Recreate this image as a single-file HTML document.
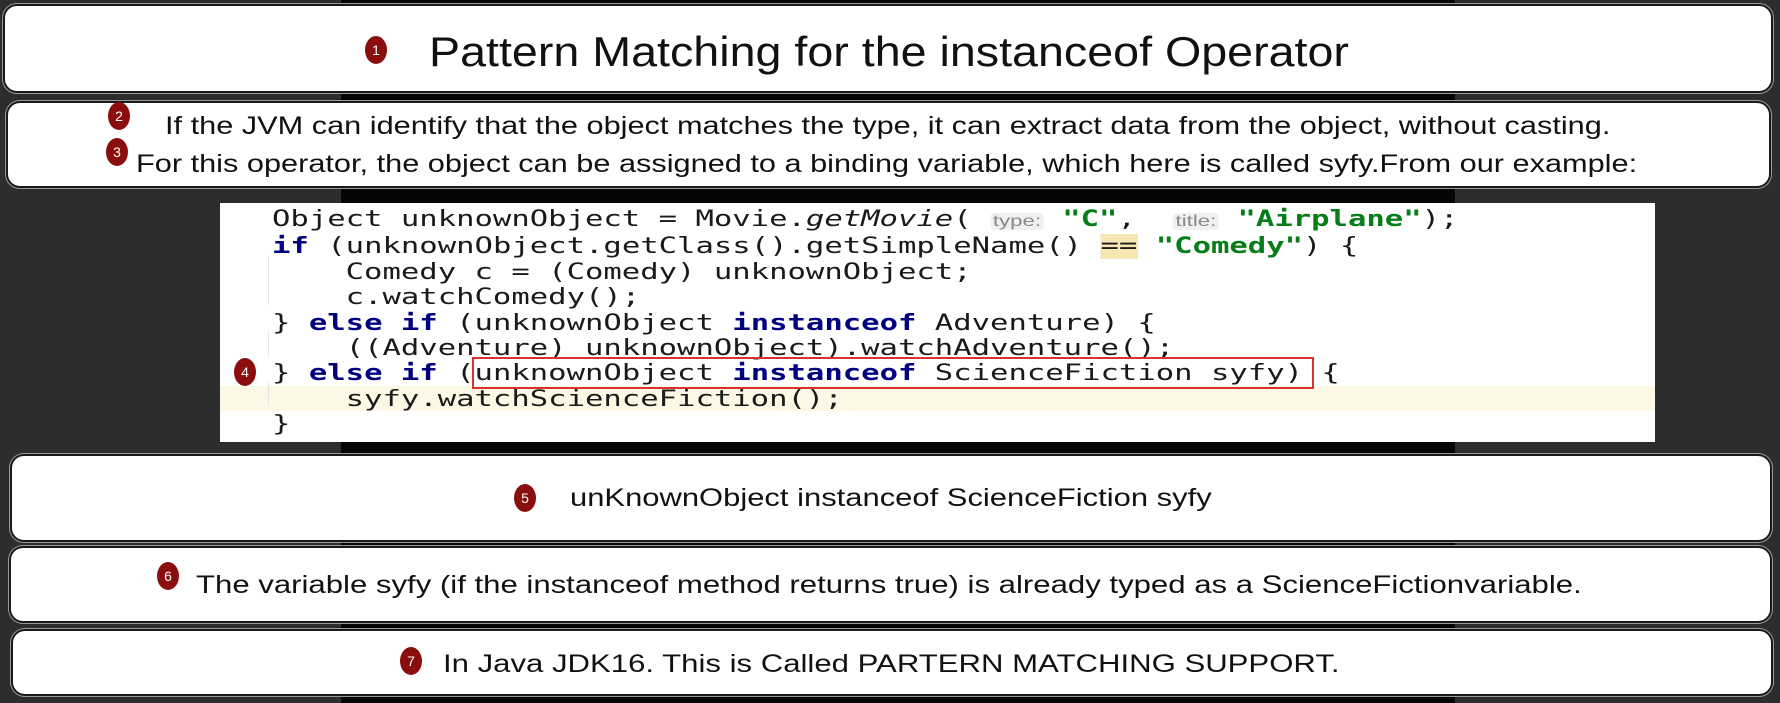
<!DOCTYPE html>
<html><head><meta charset="utf-8"><style>
*{margin:0;padding:0;box-sizing:border-box}
body{width:1780px;height:703px;background:#2d2d2d;position:relative;overflow:hidden;font-family:"Liberation Sans",Arial,sans-serif}
.blk{position:absolute;left:341px;top:0;width:1114px;height:703px;background:#050505}
.box{position:absolute;background:#fff;border:2px solid #1a1a1a;border-radius:14px;box-shadow:0 0 0 1px #999}
.t{position:absolute;white-space:nowrap;color:#111;transform:scaleX(1.24);transform-origin:0 0}
.n{position:absolute;width:22px;height:28px;border-radius:50%;background:#8b0e0e;color:#fff;font-size:14px;text-align:center;line-height:28px}
.code{position:absolute;left:220px;top:203px;width:1435px;height:239px;background:#fff}
.hl{position:absolute;left:0;top:183px;width:1435px;height:25px;background:#fdf8e6}
.lines{position:absolute;left:52px;top:4px;font-family:"DejaVu Sans Mono",monospace;font-size:22px;line-height:25.4px;color:#1a1a1a;white-space:pre;transform:scaleX(1.39);transform-origin:0 0}
.k{color:#000080;font-weight:bold}
.s{color:#067d17;font-weight:bold}
.h{font-family:"Liberation Sans",sans-serif;font-size:16px;color:#888;background:#f0f0f0;border-radius:3px;padding:0 2px}
.rb{position:absolute;left:472px;top:357px;width:842px;height:32px;border:2px solid #d93030}
.gl{position:absolute;left:268px;width:1px;background:#e5e5e5}
</style></head><body>
<div class="blk"></div>

<div class="box" style="left:3px;top:4px;width:1770px;height:89px"></div>
<div class="n" style="left:365px;top:36px">1</div>
<div class="t" style="left:429px;top:28px;font-size:42px;transform:scaleX(1.11)">Pattern Matching for the instanceof Operator</div>

<div class="box" style="left:6px;top:101px;width:1765px;height:87px"></div>
<div class="n" style="left:108px;top:102px">2</div>
<div class="t" style="left:165px;top:112px;font-size:25px;transform:scaleX(1.228)">If the JVM can identify that the object matches the type, it can extract data from the object, without casting.</div>
<div class="n" style="left:106px;top:138px">3</div>
<div class="t" style="left:136px;top:150px;font-size:25px;transform:scaleX(1.228)">For this operator, the object can be assigned to a binding variable, which here is called syfy.From our example:</div>

<div class="code">
<div class="hl"></div>
<div class="gl" style="top:52px;height:50px;left:48px"></div>
<div class="gl" style="top:128px;height:25px;left:48px"></div>
<div class="gl" style="top:178px;height:25px;left:48px"></div>
<div class="lines">Object unknownObject = Movie.<i>getMovie</i>( <span class="h">type:</span> <span class="s">"C"</span>,  <span class="h">title:</span> <span class="s">"Airplane"</span>);
<span class="k">if</span> (unknownObject.getClass().getSimpleName() <span style="background:#f5e6b4">==</span> <span class="s">"Comedy"</span>) {
    Comedy c = (Comedy) unknownObject;
    c.watchComedy();
} <span class="k">else if</span> (unknownObject <span class="k">instanceof</span> Adventure) {
    ((Adventure) unknownObject).watchAdventure();
} <span class="k">else if</span> (unknownObject <span class="k">instanceof</span> ScienceFiction syfy) {
    syfy.watchScienceFiction();
}</div>
</div>
<div class="rb"></div>
<div class="n" style="left:234px;top:358px">4</div>

<div class="box" style="left:10px;top:454px;width:1762px;height:88px"></div>
<div class="n" style="left:514px;top:484px">5</div>
<div class="t" style="left:570px;top:484px;font-size:25px;transform:scaleX(1.238)">unKnownObject instanceof ScienceFiction syfy</div>

<div class="box" style="left:9px;top:546px;width:1763px;height:77px"></div>
<div class="n" style="left:157px;top:562px">6</div>
<div class="t" style="left:196px;top:571px;font-size:25px;transform:scaleX(1.245)">The variable syfy (if the instanceof method returns true) is already typed as a ScienceFictionvariable.</div>

<div class="box" style="left:11px;top:629px;width:1762px;height:67px"></div>
<div class="n" style="left:400px;top:647px">7</div>
<div class="t" style="left:443px;top:650px;font-size:25px;transform:scaleX(1.245)">In Java JDK16. This is Called PARTERN MATCHING SUPPORT.</div>
</body></html>
